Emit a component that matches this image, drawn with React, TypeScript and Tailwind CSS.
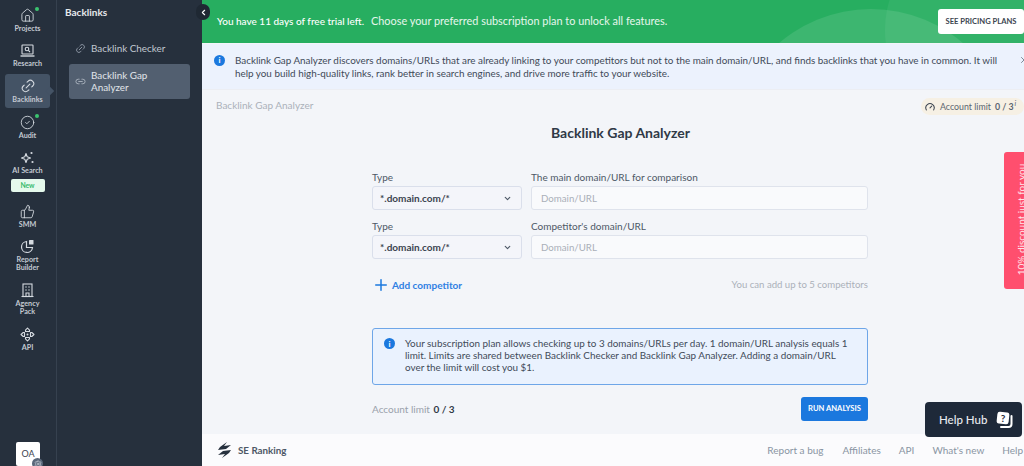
import React from "react";
import { Home, Link2, CircleCheck, ThumbsUp, ChevronLeft, ChevronDown, X, Plus, Gauge, Settings } from "lucide-react";

function ResearchIcon() {
  return (
    <svg width="15" height="15" viewBox="0 0 15 15" fill="none" stroke="currentColor" strokeWidth="1.1">
      <rect x="2" y="2" width="11" height="9" rx="0.5" />
      <circle cx="7" cy="6" r="1.8" />
      <path d="M8.4 7.4 L10 9" />
      <path d="M0.5 13 H14.5" strokeWidth="1.4" />
    </svg>
  );
}
function SparkIcon() {
  return (
    <svg width="15" height="15" viewBox="0 0 15 15" fill="none" stroke="currentColor" strokeWidth="1.1" strokeLinejoin="round">
      <path d="M6 3.5 L7.2 6.8 L10.5 8 L7.2 9.2 L6 12.5 L4.8 9.2 L1.5 8 L4.8 6.8 Z" />
      <circle cx="11.5" cy="3" r="1.1" fill="currentColor" stroke="none" />
      <circle cx="12.5" cy="12" r="1.1" fill="currentColor" stroke="none" />
    </svg>
  );
}
function PieIcon() {
  return (
    <svg width="15" height="15" viewBox="0 0 15 15" fill="none" stroke="currentColor" strokeWidth="1.2">
      <path d="M6.5 2.5 A5.5 5.5 0 1 0 12.5 8.5 H6.5 Z" />
      <rect x="9" y="1" width="4.5" height="4.5" rx="0.6" fill="currentColor" stroke="none" />
    </svg>
  );
}
function BuildingIcon() {
  return (
    <svg width="15" height="15" viewBox="0 0 15 15" fill="none" stroke="currentColor" strokeWidth="1.1">
      <rect x="3" y="1" width="9" height="12.5" />
      <path d="M1.5 13.5 H13.5" />
      <path d="M5.5 4 H6.5 M8.5 4 H9.5 M5.5 7 H6.5 M8.5 7 H9.5" strokeWidth="1.3" />
      <path d="M6 13.5 V10 H9 V13.5" />
    </svg>
  );
}
function ApiIcon() {
  return (
    <svg width="15" height="15" viewBox="0 0 15 15" fill="none" stroke="currentColor" strokeWidth="1.1" strokeLinejoin="round">
      <path d="M5.5 3.2 L7.5 1 L9.5 3.2 V4.5 H5.5 Z" />
      <path d="M5.5 11.8 L7.5 14 L9.5 11.8 V10.5 H5.5 Z" />
      <path d="M3.2 5.5 L1 7.5 L3.2 9.5 H4.5 V5.5 Z" />
      <path d="M11.8 5.5 L14 7.5 L11.8 9.5 H10.5 V5.5 Z" />
      <circle cx="7.5" cy="7.5" r="1" fill="currentColor" stroke="none" />
    </svg>
  );
}

function RailItem({ icon, label, dot, active, h, children }: { icon: React.ReactNode; label: React.ReactNode; dot?: boolean; active?: boolean; h: string; children?: React.ReactNode }) {
  return (
    <div className={`relative mx-[5px] w-[45px] shrink-0 flex flex-col items-center rounded-[3px] ${h} ${active ? "bg-[#445365]" : ""}`}>
      <div className="relative h-[22px] flex items-center justify-center text-[#d5dae0]">
        {icon}
        {dot && <span className="absolute right-[-4px] top-[3px] w-[4px] h-[4px] rounded-full bg-[#3bc46f]" />}
      </div>
      <div className="text-[7.2px] leading-[8px] -mt-[1.5px] text-center font-bold text-[#c4cad2] whitespace-nowrap">{label}</div>
      {children}
      {active && <span className="absolute right-[-3px] top-[14px] w-[6px] h-[6px] rotate-45 bg-[#445365]" />}
    </div>
  );
}

function Row({ label, mt }: { label: string; mt: string }) {
  return (
    <div className={`flex gap-[9px] ${mt}`}>
      <div className="w-[150px]">
        <div className="text-[10px] leading-[14px] text-[#4d5866] mb-[2px]">Type</div>
        <div className="h-[24px] rounded-[3px] border border-[#dadfeb] bg-[#f4f5fa] flex items-center justify-between pl-[7px] pr-[9px] text-[10px] font-bold text-[#3b4450]">
          <span>*.domain.com/*</span>
          <ChevronDown size={9} strokeWidth={3} className="text-[#4d5866]" />
        </div>
      </div>
      <div className="w-[337px]">
        <div className="text-[10px] leading-[14px] text-[#4d5866] mb-[2px]">{label}</div>
        <div className="h-[24px] rounded-[3px] border border-[#dfe3ec] bg-[#f9fafc] flex items-center pl-[9px] text-[9.7px] text-[#a9afb8]">Domain/URL</div>
      </div>
    </div>
  );
}

export default function App() {
  return (
    <div className="relative w-[1024px] h-[466px] overflow-hidden flex bg-[#f3f5f9] font-['Lato','Noto_Sans',sans-serif]">
      <aside className="w-[56px] h-full shrink-0 bg-[#26303d] border-r border-[#36414f] box-content flex flex-col pt-[4px]">
        <RailItem h="h-[35px]" dot label="Projects" icon={<Home size={15} strokeWidth={1.4} />} />
        <RailItem h="h-[35px]" label="Research" icon={<ResearchIcon />} />
        <RailItem h="h-[34px] pt-[1px]" active label="Backlinks" icon={<Link2 size={16} strokeWidth={1.6} className="-rotate-45" />} />
        <RailItem h="h-[35px] mt-[3px]" dot label="Audit" icon={<CircleCheck size={15} strokeWidth={1.4} />} />
        <RailItem h="h-[54px]" label="AI Search" icon={<SparkIcon />}>
          <span className="mt-[4.5px] w-[34px] h-[13px] rounded-[2px] bg-[#e5f9ec] text-[#35b96b] text-[6.8px] font-bold flex items-center justify-center">New</span>
        </RailItem>
        <RailItem h="h-[35px]" label="SMM" icon={<ThumbsUp size={15} strokeWidth={1.4} />} />
        <RailItem h="h-[44px]" label={<>Report<br />Builder</>} icon={<PieIcon />} />
        <RailItem h="h-[44px]" label={<>Agency<br />Pack</>} icon={<BuildingIcon />} />
        <RailItem h="h-[35px]" label="API" icon={<ApiIcon />} />
        <div className="relative mt-auto mb-[4px] ml-[16px] w-[24px] h-[24px] rounded-[2px] bg-white flex items-center justify-center text-[9px] text-[#3b4450]">
          OA
          <span className="absolute right-[-3px] bottom-[-3px] w-[11px] h-[11px] rounded-full bg-[#59677a] flex items-center justify-center">
            <Settings size={8} className="text-[#cfd5dc]" />
          </span>
        </div>
      </aside>

      <nav className="relative w-[145px] h-full shrink-0 bg-[#26303d] px-[12px]">
        <div className="pt-[4px] text-[10px] leading-[17px] font-bold text-[#e6e9ed] -ml-[4px]">Backlinks</div>
        <div className="mt-[11px] h-[32px] flex items-center text-[9.9px] text-[#c2c9d1]">
          <Link2 size={11} className="-rotate-45 text-[#8f99a6] ml-[6px] mr-[5px]" />
          Backlink Checker
        </div>
        <div className="h-[35px] w-[121px] rounded-[3px] bg-[#525f70] flex items-center text-[9.9px] leading-[11.5px] text-[#e2e6ea]">
          <Link2 size={11} className="text-[#aab2bd] ml-[6px] mr-[5px] shrink-0" />
          <span>Backlink Gap<br />Analyzer</span>
        </div>
      </nav>

      <main className="flex-1 min-w-0 h-full flex flex-col">
        <div className="relative h-[43px] shrink-0 bg-[#27ae60] overflow-hidden flex items-center pl-[15px] text-white">
          <span className="absolute left-[528px] top-[9px] w-[282px] h-[282px] rounded-full bg-white/10" />
          <span className="absolute left-[683px] top-[-70px] w-[200px] h-[200px] rounded-full bg-white/5" />
          <span className="relative text-[10px] font-medium whitespace-nowrap">You have 11 days of free trial left.</span>
          <span className="relative ml-[7px] text-[10.9px] text-[#e6f6ec] whitespace-nowrap">Choose your preferred subscription plan to unlock all features.</span>
          <span className="relative ml-auto w-[86px] h-[25px] rounded-[3px] bg-white flex items-center justify-center text-[7.6px] font-bold text-[#3b4450] whitespace-nowrap">SEE PRICING PLANS</span>
        </div>
        <div className="relative h-[46px] shrink-0 mt-[1px] bg-[#ecf2fd] border-b border-[#eceef3] flex pl-[12px] pt-[10px] text-[9.87px] leading-[13px] text-[#3f4a58]">
          <span className="w-[11px] h-[11px] mt-[1px] rounded-full bg-[#1b78de] text-white text-[8px] font-bold flex items-center justify-center shrink-0">i</span>
          <p className="ml-[10px] w-[778px]">Backlink Gap Analyzer discovers domains/URLs that are already linking to your competitors but not to the main domain/URL, and finds backlinks that you have in common. It will<br />help you build high-quality links, rank better in search engines, and drive more traffic to your website.</p>
          <X size={10} className="absolute right-[-5px] top-[11px] text-[#66717f]" />
        </div>

        <div className="flex-1 min-h-0 flex flex-col">
          <div className="h-[31px] shrink-0 flex items-center justify-between pl-[14px]">
            <span className="text-[10px] text-[#abb1ba]">Backlink Gap Analyzer</span>
            <span className="h-[17px] w-[103px] mt-[2px] rounded-l-full rounded-r-full bg-[#f6f0e4] flex items-center pl-[4px] text-[8.8px] text-[#5a6470]">
              <Gauge size={10} strokeWidth={2.5} className="mr-[5px] text-[#3b4450]" />
              Account limit
              <span className="ml-[4px] font-bold">0 / 3</span>
              <i className="ml-[1px] -mt-[6px] text-[7px]">i</i>
            </span>
          </div>
          <h1 className="text-center pl-[15px] text-[14px] leading-[20px] font-bold text-[#2f3946] mt-[2px]">Backlink Gap Analyzer</h1>

          <div className="w-[496px] ml-[170px] mt-[27px]">
            <Row label="The main domain/URL for comparison" mt="mt-0" />
            <Row label="Competitor's domain/URL" mt="mt-[9px]" />
            <div className="mt-[18px] h-[16px] flex items-center justify-between">
              <span className="flex items-center text-[10px] font-bold text-[#2f80e3]">
                <Plus size={18} strokeWidth={2} className="mr-[2px] text-[#1b78de]" />
                Add competitor
              </span>
              <span className="text-[9.6px] text-[#abb1ba]">You can add up to 5 competitors</span>
            </div>
            <div className="mt-[35px] h-[57px] rounded-[3px] border border-[#6ea6e8] bg-[#eaf2fe] flex pl-[11px] pt-[8px] text-[9.9px] leading-[12px] text-[#3f4a58]">
              <span className="w-[11px] h-[11px] mt-[1px] rounded-full bg-[#1b78de] text-white text-[8px] font-bold flex items-center justify-center shrink-0">i</span>
              <p className="ml-[10px] w-[460px]">Your subscription plan allows checking up to 3 domains/URLs per day. 1 domain/URL analysis equals 1<br />limit. Limits are shared between Backlink Checker and Backlink Gap Analyzer. Adding a domain/URL<br />over the limit will cost you $1.</p>
            </div>
            <div className="mt-[12px] flex items-center justify-between">
              <span className="text-[10px] text-[#9aa1ab]">Account limit <b className="ml-[1px] text-[#2f3946]">0 / 3</b></span>
              <span className="w-[67px] h-[24px] rounded-[3px] bg-[#1b78de] text-white text-[7.6px] font-bold flex items-center justify-center whitespace-nowrap">RUN ANALYSIS</span>
            </div>
          </div>
        </div>

        <footer className="h-[32px] shrink-0 bg-[#fbfbfd] flex items-center pl-[15px] pr-[1px] text-[10px] text-[#8a95a3]">
          <svg width="15" height="16" viewBox="0 0 15 16" className="fill-[#26303d]">
            <path d="M10 0 L3 5 L1 8 L9 7 L14 3 L7 4 Z" />
            <path d="M5 16 L12 11 L14 8 L6 9 L1 13 L8 12 Z" />
          </svg>
          <span className="ml-[6px] text-[#4d5866] font-bold text-[9.8px]">SE Ranking</span>
          <span className="ml-auto">Report a bug</span>
          <span className="ml-[19px]">Affiliates</span>
          <span className="ml-[18px]">API</span>
          <span className="ml-[18px]">What's new</span>
          <span className="ml-[18px]">Help</span>
        </footer>
      </main>

      <span className="absolute left-[196px] top-[4px] w-[14px] h-[16px] rounded-full bg-[#1f2833] flex items-center justify-center text-white">
        <ChevronLeft size={9} strokeWidth={3} />
      </span>
      <div className="absolute left-[1004px] top-[152px] w-[30px] h-[137px] rounded-[3px] bg-[#ff4f6e] flex items-center justify-center">
        <span className="block -rotate-90 whitespace-nowrap text-[10px] text-[#ffe3e8] translate-x-[3px] -translate-y-[1px]">10% discount just for you</span>
      </div>
      <div className="absolute left-[925px] top-[402px] w-[97px] h-[35px] rounded-[4px] bg-[#1e2939] flex items-center pl-[14px] text-[11.5px] font-medium text-[#e8eaee]">
        Help Hub
        <svg width="18" height="18" viewBox="0 0 18 18" className="ml-[9px]">
          <rect x="1" y="1" width="12" height="12" rx="2.5" fill="#fff" transform="rotate(6 7 7)" />
          <text x="7" y="11" fontSize="10" fontWeight="700" textAnchor="middle" fill="#1e2939">?</text>
          <path d="M15.5 5 V13 Q15.5 16 12.5 16 H5" fill="none" stroke="#fff" strokeWidth="2" strokeLinecap="round" />
        </svg>
      </div>
    </div>
  );
}
